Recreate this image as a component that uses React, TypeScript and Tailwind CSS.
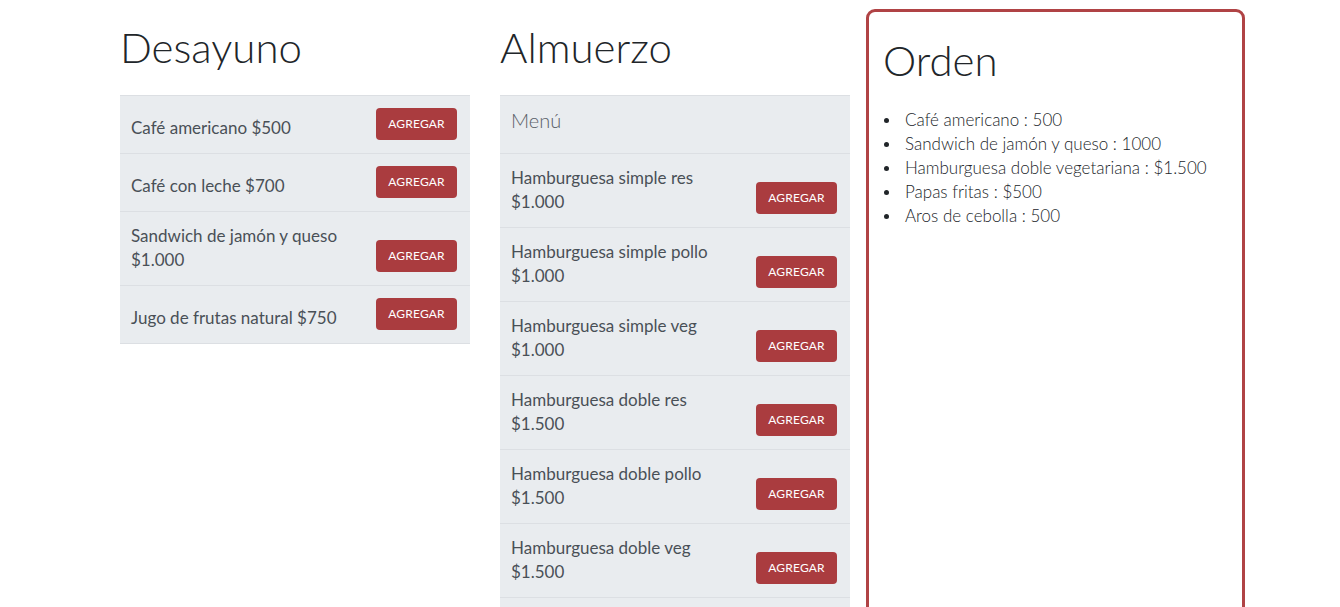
import React from "react";

const font = { fontFamily: "Lato, 'Noto Sans', sans-serif" };

type Item = { lines: string[] };

const desayuno: Item[] = [
  { lines: ["Café americano $500"] },
  { lines: ["Café con leche $700"] },
  { lines: ["Sandwich de jamón y queso", "$1.000"] },
  { lines: ["Jugo de frutas natural $750"] },
];

const almuerzo: Item[] = [
  { lines: ["Hamburguesa simple res", "$1.000"] },
  { lines: ["Hamburguesa simple pollo", "$1.000"] },
  { lines: ["Hamburguesa simple veg", "$1.000"] },
  { lines: ["Hamburguesa doble res", "$1.500"] },
  { lines: ["Hamburguesa doble pollo", "$1.500"] },
  { lines: ["Hamburguesa doble veg", "$1.500"] },
  { lines: ["Papas fritas", "$500"] },
  { lines: ["Aros de cebolla", "$500"] },
];

const orden = [
  "Café americano : 500",
  "Sandwich de jamón y queso : 1000",
  "Hamburguesa doble vegetariana : $1.500",
  "Papas fritas : $500",
  "Aros de cebolla : 500",
];

function Row({ item }: { item: Item }) {
  return (
    <li className="flex items-end justify-between bg-[#e9ecef] border-b border-[#dcdfe3] pl-[11px] pr-[13px] pt-3 pb-[13px]">
      <div className="text-[17px] leading-6 text-[#495057]">
        {item.lines.map((l, i) => (
          <div key={i}>{l}</div>
        ))}
      </div>
      <button className="h-8 w-[81px] rounded bg-[#aa3c3f] text-white text-[12px] leading-8 tracking-[0.2px] shrink-0">
        AGREGAR
      </button>
    </li>
  );
}

export default function App() {
  return (
    <div className="w-full h-[607px] overflow-hidden bg-white" style={font}>
      <div className="flex pl-[120px]">
        <div className="w-[350px]">
          <h1 className="h-[95px] pt-[23px] text-[42px] leading-[48px] font-light text-[#212529]">Desayuno</h1>
          <ul className="border-t border-[#dcdfe3]">
            {desayuno.map((it, i) => (
              <Row key={i} item={it} />
            ))}
          </ul>
        </div>
        <div className="w-[350px] ml-[30px]">
          <h1 className="h-[95px] pt-[23px] text-[42px] leading-[48px] font-light text-[#212529]">Almuerzo</h1>
          <ul className="border-t border-[#dcdfe3]">
            <li className="h-[58px] bg-[#e9ecef] border-b border-[#dcdfe3] pl-[11px] pt-[9px] text-[20px] leading-[30px] font-light text-[#5a6168]">
              Menú
            </li>
            {almuerzo.map((it, i) => (
              <Row key={i} item={it} />
            ))}
          </ul>
        </div>
        <div className="w-[379px] ml-4 mt-[9px] h-[700px] border-[3px] border-[#b04345] rounded-[9px] pl-[14px] pt-[20px]">
          <h2 className="text-[42px] leading-[56px] font-light text-[#212529]">Orden</h2>
          <ul className="mt-[20px] text-[17px] leading-6 font-light text-[#212529]">
            {orden.map((o, i) => (
              <li key={i} className="flex items-center">
                <span className="w-[5px] h-[5px] rounded-full bg-[#212529] ml-[1px] mr-[16px] shrink-0" />
                <span>{o}</span>
              </li>
            ))}
          </ul>
        </div>
      </div>
    </div>
  );
}
